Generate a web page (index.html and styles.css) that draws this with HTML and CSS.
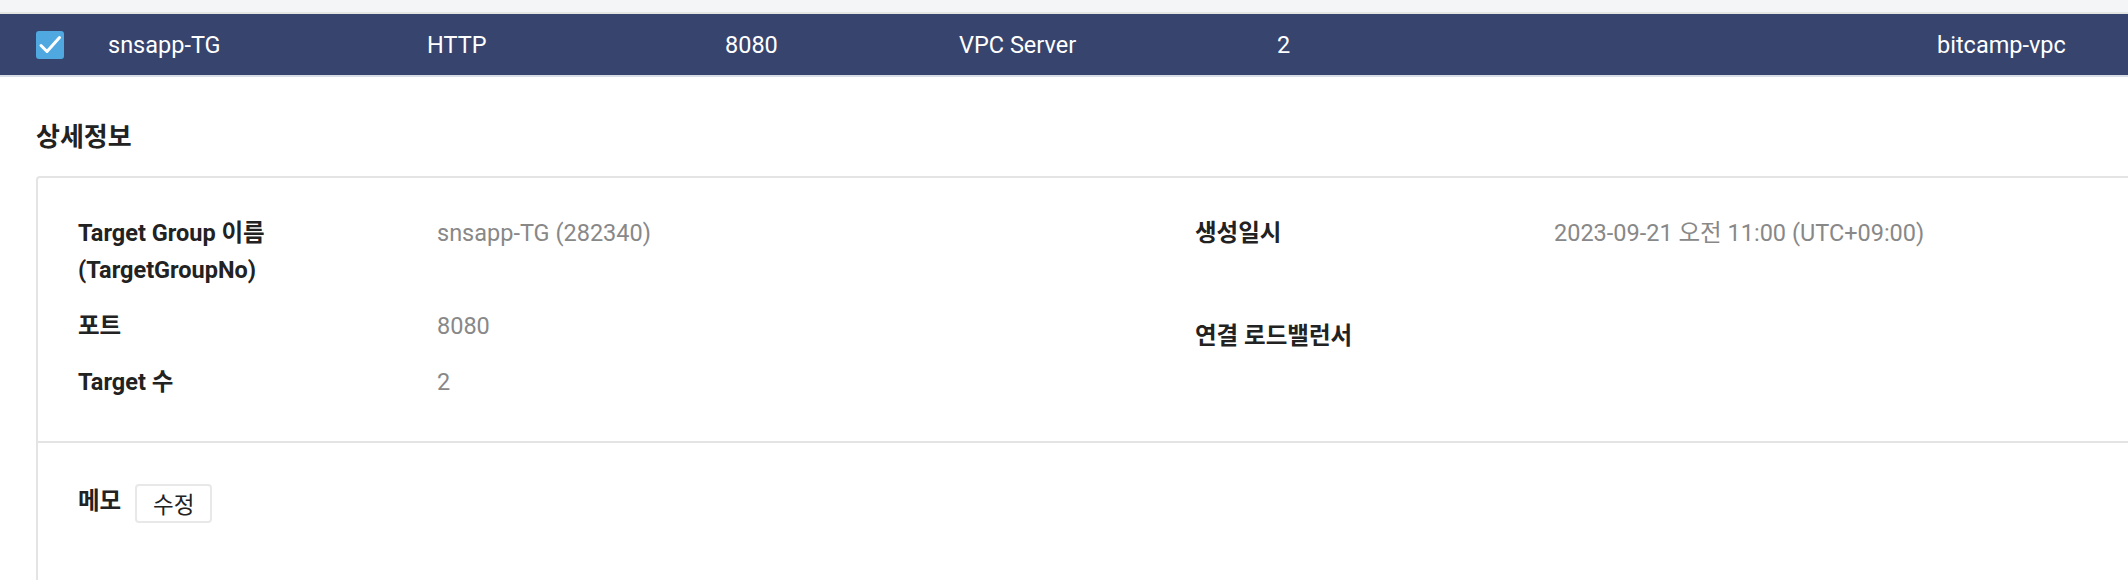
FILE: index.html
```html
<!DOCTYPE html>
<html lang="ko">
<head>
    <meta charset="UTF-8">
    <meta name="viewport" content="width=device-width, initial-scale=1.0">
    <title>Target Group 상세정보</title>
    <link rel="stylesheet" href="styles.css">
</head>
<body>

    <div class="top-strip"></div>

    <!-- selected target group row -->
    <div class="tg-row">
        <span class="check">
            <svg viewBox="0 0 28 28" width="28" height="28">
                <path d="M5 14.5 L11 20.5 L23.5 6.5" fill="none" stroke="#fff" stroke-width="3" stroke-linecap="round" stroke-linejoin="round"/>
            </svg>
        </span>
        <span>snsapp-TG</span>
        <span>HTTP</span>
        <span>8080</span>
        <span>VPC Server</span>
        <span>2</span>
        <span>bitcamp-vpc</span>
    </div>

    <section class="detail">
        <h2 class="detail-title">상세정보</h2>

        <div class="panel">
            <div class="panel-info">
                <dl class="info-list">
                    <div class="info-item">
                        <dt>Target Group 이름<br>(TargetGroupNo)</dt>
                        <dd>snsapp-TG (282340)</dd>
                    </div>
                    <div class="info-item">
                        <dt>포트</dt>
                        <dd>8080</dd>
                    </div>
                    <div class="info-item">
                        <dt>Target 수</dt>
                        <dd>2</dd>
                    </div>
                </dl>
                <dl class="info-list info-list-right">
                    <div class="info-item">
                        <dt>생성일시</dt>
                        <dd>2023-09-21 오전 11:00 (UTC+09:00)</dd>
                    </div>
                    <div class="info-item">
                        <dt>연결 로드밸런서</dt>
                        <dd></dd>
                    </div>
                </dl>
            </div>

            <div class="panel-memo">
                <span class="memo-label">메모</span>
                <button class="btn-edit">수정</button>
            </div>
        </div>
    </section>

</body>
</html>
```

FILE: styles.css
```css
body {
    margin: 0;
    font-family: Roboto, "Noto Sans CJK KR", sans-serif;
    font-size: 23.5px;
    color: #222;
    background-color: #fff;
    overflow: hidden;
}

.top-strip {
    height: 12px;
    background-color: #f4f5f7;
    border-bottom: 2px solid #e2e5e2;
}

.tg-row {
    display: grid;
    grid-template-columns: 72px 319px 298px 234px 318px 660px 1fr;
    align-items: center;
    height: 61px;
    padding-left: 36px;
    background-color: #37446e;
    border-bottom: 2px solid #d9dde6;
    color: #fff;
}

.check {
    display: flex;
    width: 28px;
    height: 28px;
    border-radius: 3px;
    background-color: #4fa9e0;
}

.detail-title {
    margin: 0;
    padding: 45px 0 0 36px;
    font-size: 26px;
    line-height: 30px;
    font-weight: 700;
    color: #222;
}

.panel {
    margin: 24px -20px 0 36px;
    border: 2px solid #e4e4e4;
    border-bottom: none;
    border-radius: 4px 0 0 0;
}

.panel-info {
    display: grid;
    grid-template-columns: 1117px 1fr;
    padding: 37px 0 40px 40px;
    border-bottom: 2px solid #e4e4e4;
}

.info-list {
    display: flex;
    flex-direction: column;
    gap: 19px;
    margin: 0;
}

.info-list-right {
    gap: 66px;
}

.info-item {
    display: grid;
    grid-template-columns: 359px 1fr;
    line-height: 37px;
}

.info-item dt {
    font-weight: 700;
    color: #222;
}

.info-item dd {
    margin: 0;
    color: #888;
}

.panel-memo {
    display: flex;
    align-items: center;
    gap: 14px;
    padding: 40px 0 80px 40px;
}

.memo-label {
    font-weight: 700;
    line-height: 37px;
    padding-bottom: 3px;
}

.btn-edit {
    width: 77px;
    height: 39px;
    padding: 0;
    border: 2px solid #e8e8e8;
    border-radius: 4px;
    background-color: #fff;
    font-family: inherit;
    font-size: 22.5px;
    color: #222;
}
```
